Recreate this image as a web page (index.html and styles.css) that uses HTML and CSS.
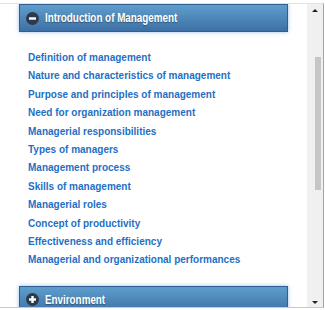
FILE: index.html
```html
<!DOCTYPE html>
<html lang="en">
<head>
    <meta charset="UTF-8">
    <title>Management</title>
    <link rel="stylesheet" href="styles.css">
</head>
<body>
<div class="frame">
    <div class="content">
        <div class="panel">
            <div class="panel-head">
                <svg class="icon" width="13" height="13" viewBox="0 0 13 13">
                    <circle cx="6.5" cy="6.5" r="6.5" fill="#2c3b4c"/>
                    <rect x="3" y="5.3" width="7" height="2.4" fill="#fff"/>
                </svg>
                <span class="title">Introduction of Management</span>
            </div>
            <ul class="topics">
                <li><a href="#">Definition of management</a></li>
                <li><a href="#">Nature and characteristics of management</a></li>
                <li><a href="#">Purpose and principles of management</a></li>
                <li><a href="#">Need for organization management</a></li>
                <li><a href="#">Managerial responsibilities</a></li>
                <li><a href="#">Types of managers</a></li>
                <li><a href="#">Management process</a></li>
                <li><a href="#">Skills of management</a></li>
                <li><a href="#">Managerial roles</a></li>
                <li><a href="#">Concept of productivity</a></li>
                <li><a href="#">Effectiveness and efficiency</a></li>
                <li><a href="#">Managerial and organizational performances</a></li>
            </ul>
        </div>
        <div class="panel">
            <div class="panel-head">
                <svg class="icon" width="13" height="13" viewBox="0 0 13 13">
                    <circle cx="6.5" cy="6.5" r="6.5" fill="#2c3b4c"/>
                    <rect x="3" y="5.3" width="7" height="2.4" fill="#fff"/>
                    <rect x="5.3" y="3" width="2.4" height="7" fill="#fff"/>
                </svg>
                <span class="title">Environment</span>
            </div>
        </div>
    </div>
    <div class="scrollbar">
        <span class="arrow-up"></span>
        <div class="thumb"></div>
        <span class="arrow-down"></span>
    </div>
</div>
</body>
</html>
```

FILE: styles.css
```css
* {
    margin: 0;
    padding: 0;
    box-sizing: border-box;
}

body {
    background: #fff;
    font-family: "Liberation Sans", Arial, sans-serif;
}

ul {
    list-style: none;
}

.frame {
    display: flex;
    width: 324px;
    height: 305px;
    margin-top: 3px;
    border-top: 1px solid #e2e2e2;
    border-right: 1px solid #9aa6b8;
    border-bottom: 1px solid #c8c8c8;
    overflow: hidden;
}

.content {
    flex: 1;
    padding: 0 19px;
    overflow: hidden;
}

.panel-head {
    display: flex;
    align-items: center;
    gap: 6px;
    height: 28px;
    padding-left: 6px;
    color: #fff;
    font-size: 12px;
    font-weight: bold;
    text-shadow: 0 1px 1px rgba(0, 0, 0, .35);
    background: linear-gradient(#5e9ecb, #3d70a6);
    border: 1px solid #2f5f92;
    box-shadow: 0 0 4px rgba(70, 130, 210, .55);
}

/* the original uses a narrow bold face */
.title {
    display: inline-block;
    white-space: nowrap;
    transform: scaleX(.82);
    transform-origin: left center;
}

.icon {
    flex: none;
}

.topics {
    padding: 17px 0 16px 9px;
}

.topics li {
    line-height: 18.4px;
    font-size: 10px;
    font-weight: bold;
}

.topics a {
    color: #1f6fc4;
    text-decoration: none;
}

.scrollbar {
    display: flex;
    flex-direction: column;
    align-items: center;
    width: 16px;
    background: #f0f0f0;
    padding: 5px 0 3px;
}

.arrow-up {
    width: 0;
    height: 0;
    border-left: 3px solid transparent;
    border-right: 3px solid transparent;
    border-bottom: 3px solid #222;
}

.thumb {
    width: 6px;
    height: 133px;
    margin: 45px 0 0 5px;
    background: #c6c6c6;
}

.arrow-down {
    margin-top: auto;
    width: 0;
    height: 0;
    border-left: 3px solid transparent;
    border-right: 3px solid transparent;
    border-top: 3px solid #222;
}
```
